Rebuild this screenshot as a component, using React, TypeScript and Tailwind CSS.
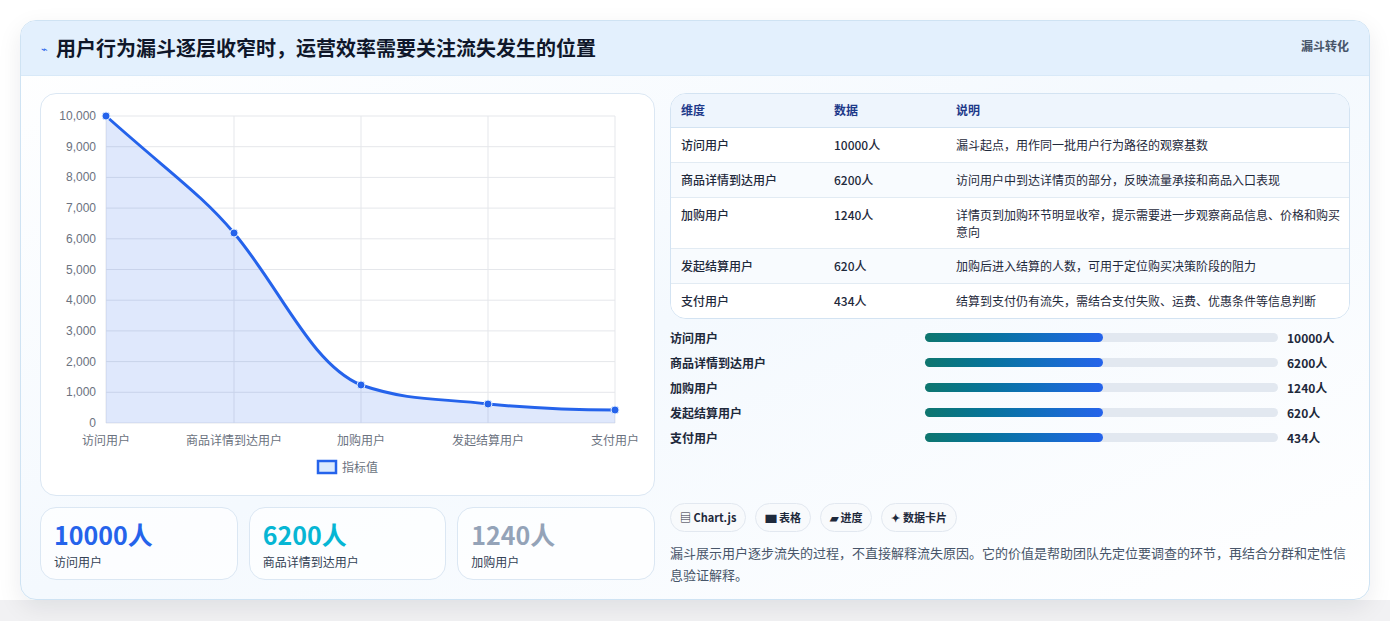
const rows = [
  { name: "访问用户", value: "10000人", desc: "漏斗起点，用作同一批用户行为路径的观察基数" },
  { name: "商品详情到达用户", value: "6200人", desc: "访问用户中到达详情页的部分，反映流量承接和商品入口表现" },
  { name: "加购用户", value: "1240人", desc: "详情页到加购环节明显收窄，提示需要进一步观察商品信息、价格和购买意向" },
  { name: "发起结算用户", value: "620人", desc: "加购后进入结算的人数，可用于定位购买决策阶段的阻力" },
  { name: "支付用户", value: "434人", desc: "结算到支付仍有流失，需结合支付失败、运费、优惠条件等信息判断" },
];

const xs = [65, 193, 320, 447, 574];
const ys = [22, 139, 291, 310, 316];
const yTicks = ["10,000", "9,000", "8,000", "7,000", "6,000", "5,000", "4,000", "3,000", "2,000", "1,000", "0"];

function Chart() {
  const line = `M65,22 C130,80 160,100 193,139 C240,195 270,270 320,291 C370,308 400,304 447,310 C500,315 540,316 574,316`;
  return (
    <svg width="615" height="402" viewBox="0 0 615 402" className="block" style={{ fontFamily: "'Liberation Sans', 'Noto Sans CJK SC', sans-serif" }}>
      {yTicks.map((t, i) => {
        const y = 22 + i * 30.7;
        return (
          <g key={t}>
            <line x1={65} x2={574} y1={y} y2={y} stroke="#e5e7eb" />
            <text x={55} y={y + 4} fontSize="12" fill="#6b7280" textAnchor="end">{t}</text>
          </g>
        );
      })}
      {xs.map((x) => (
        <line key={x} x1={x} x2={x} y1={22} y2={329} stroke="#e5e7eb" />
      ))}
      <path d={`${line} L574,329 L65,329 Z`} fill="rgba(37,99,235,0.15)" />
      <path d={line} fill="none" stroke="#2563eb" strokeWidth="3" />
      {xs.map((x, i) => (
        <circle key={x} cx={x} cy={ys[i]} r="4" fill="#2563eb" stroke="#dbeafe" strokeWidth="1" />
      ))}
      {rows.map((r, i) => (
        <text key={r.name} x={xs[i]} y={351} fontSize="12" fill="#6b7280" textAnchor="middle">{r.name}</text>
      ))}
      <rect x={277} y={367} width={18} height={12} fill="#dbeafe" stroke="#2563eb" strokeWidth="2.5" />
      <text x={301} y={378} fontSize="12" fill="#6b7280">指标值</text>
    </svg>
  );
}

export default function App() {
  return (
    <div className="min-h-[621px] w-[1390px] pt-5 pl-5 pr-5 pb-5" style={{ fontFamily: "'Noto Sans CJK SC', 'Liberation Sans', sans-serif", background: "linear-gradient(#ffffff, #ffffff 600px, #f1f1f3 600px)" }}>
      <div className="w-[1350px] h-[580px] overflow-hidden rounded-2xl border border-[#cfe3f3] bg-gradient-to-br from-white via-[#f4f9fe] to-white shadow-[0_8px_24px_rgba(15,23,42,0.08)]">
        <div className="flex h-[55px] items-center justify-between border-b border-[#d8e9f8] bg-[#e3f0fd] px-5">
          <div className="flex items-center gap-2">
            <span className="text-[11px] text-[#2563eb]">⌁</span>
            <h1 className="text-[20px] font-bold text-[#0f172a]">用户行为漏斗逐层收窄时，运营效率需要关注流失发生的位置</h1>
          </div>
          <span className="self-start pt-4 text-[12px] font-semibold text-[#475569]">漏斗转化</span>
        </div>
        <div className="flex gap-[15px] px-[19px] pt-[17px]">
          <div className="flex w-[615px] flex-col gap-[11px]">
            <div className="h-[403px] rounded-2xl border border-[#dbe7f3] bg-white">
              <Chart />
            </div>
            <div className="flex gap-[11px]">
              {[
                ["10000人", "访问用户", "text-[#2563eb]"],
                ["6200人", "商品详情到达用户", "text-[#06b6d4]"],
                ["1240人", "加购用户", "text-[#94a3b8]"],
              ].map(([v, l, c]) => (
                <div key={l} className="h-[73px] flex-1 rounded-2xl border border-[#dbe7f3] bg-white/70 px-[13px] pt-[10px]">
                  <div className={`text-[25px] font-bold leading-[32px] ${c}`}>{v}</div>
                  <div className="mt-[3px] text-[12px] text-[#334155]">{l}</div>
                </div>
              ))}
            </div>
          </div>
          <div className="flex w-[681px] flex-col">
            <div className="overflow-hidden rounded-2xl border border-[#d3e3f2] bg-white">
              <table className="w-full text-[12px] text-[#1e293b]">
                <thead>
                  <tr className="h-[33px] border-b border-[#d3e3f2] bg-[#eef5fd] text-left text-[#1e3a8a]">
                    <th className="w-[163px] pl-[10px] font-semibold">维度</th>
                    <th className="w-[122px] font-semibold">数据</th>
                    <th className="font-semibold">说明</th>
                  </tr>
                </thead>
                <tbody>
                  {rows.map((r, i) => (
                    <tr key={r.name} className={`border-b border-[#e2ebf3] last:border-b-0 ${i % 2 ? "bg-[#f8fbfe]" : "bg-white"}`}>
                      <td className="py-[8px] pl-[10px] align-top font-medium leading-[18px]">{r.name}</td>
                      <td className="py-[8px] align-top font-medium leading-[18px]">{r.value}</td>
                      <td className="py-[8px] pr-[8px] align-top leading-[17px]">{r.desc}</td>
                    </tr>
                  ))}
                </tbody>
              </table>
            </div>
            <div className="mt-[10px] flex flex-col gap-[7px]">
              {rows.map((r) => (
                <div key={r.name} className="flex h-[18px] items-center text-[12px] font-semibold text-[#1e293b]">
                  <span className="w-[255px]">{r.name}</span>
                  <div className="h-[9px] w-[353px] rounded-full bg-[#e2e8f0]">
                    <div className="h-full w-[178px] rounded-full bg-gradient-to-r from-[#0f766e] to-[#2563eb]" />
                  </div>
                  <span className="ml-[9px]">{r.value}</span>
                </div>
              ))}
            </div>
            <div className="mt-[56px] flex gap-[9px]">
              {["▤ Chart.js", "▆ 表格", "▰ 进度", "✦ 数据卡片"].map((c) => (
                <span key={c} className="flex h-[29px] items-center rounded-full border border-[#e2e8f0] bg-[#f8fafc] px-[9px] text-[11px] font-semibold text-[#1e293b]">{c}</span>
              ))}
            </div>
            <p className="mt-[10px] text-[13px] leading-[22px] text-[#475569]">
              漏斗展示用户逐步流失的过程，不直接解释流失原因。它的价值是帮助团队先定位要调查的环节，再结合分群和定性信息验证解释。
            </p>
          </div>
        </div>
      </div>
    </div>
  );
}
